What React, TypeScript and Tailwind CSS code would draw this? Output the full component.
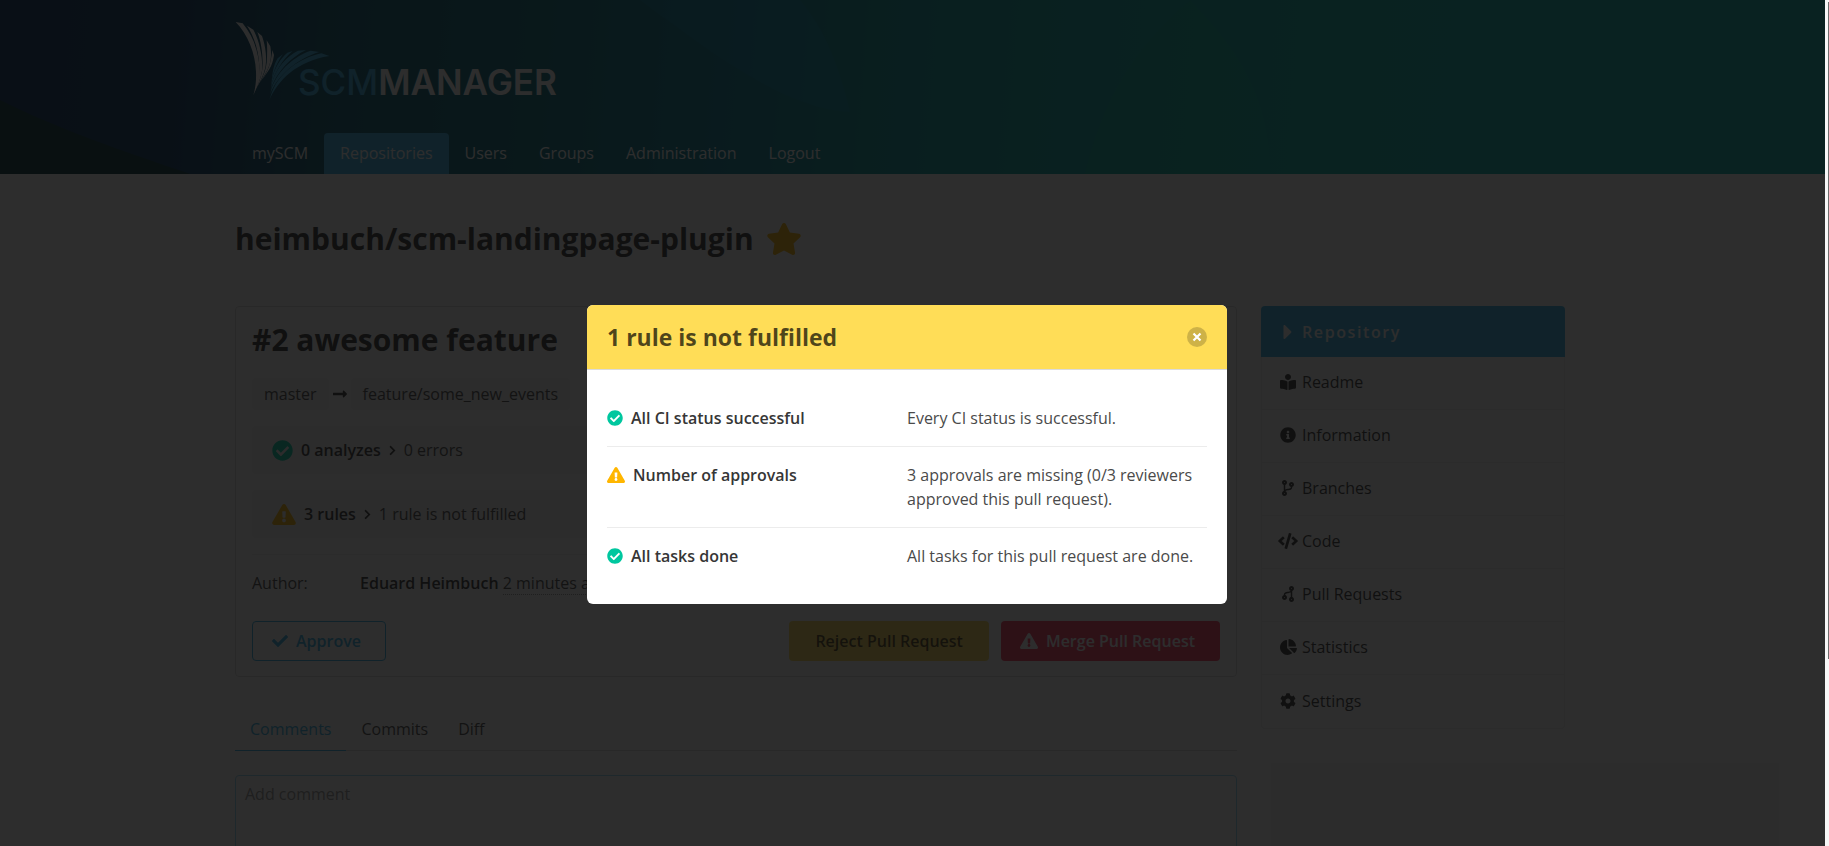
import type { ReactNode } from "react";
import type { IconType } from "react-icons";
import {
  FaBookReader,
  FaCaretRight,
  FaChartPie,
  FaCheck,
  FaCheckCircle,
  FaChevronRight,
  FaCode,
  FaCodeBranch,
  FaCog,
  FaExclamationTriangle,
  FaInfoCircle,
  FaLongArrowAltRight,
  FaStar,
} from "react-icons/fa";

const navItems = ["mySCM", "Repositories", "Users", "Groups", "Administration", "Logout"];

const sideItems: { label: string; icon: IconType; iconClass: string }[] = [
  { label: "Readme", icon: FaBookReader, iconClass: "size-4" },
  { label: "Information", icon: FaInfoCircle, iconClass: "size-4" },
  { label: "Branches", icon: FaCodeBranch, iconClass: "size-4" },
  { label: "Code", icon: FaCode, iconClass: "h-4 w-5" },
  { label: "Pull Requests", icon: FaCodeBranch, iconClass: "size-4 rotate-180" },
  { label: "Statistics", icon: FaChartPie, iconClass: "h-4 w-[17px]" },
  { label: "Settings", icon: FaCog, iconClass: "size-4" },
];

const rules = [
  { ok: true, name: "All CI status successful", text: "Every CI status is successful." },
  {
    ok: false,
    name: "Number of approvals",
    text: "3 approvals are missing (0/3 reviewers approved this pull request).",
  },
  { ok: true, name: "All tasks done", text: "All tasks for this pull request are done." },
];

function Logo() {
  return (
    <svg width="340" height="82" viewBox="0 0 340 82" role="img" aria-label="SCM-Manager">
      <g transform="translate(-15 -20) scale(0.33333)">
        <g fill="#ffffff">
          <path d="M47 66 L68 70 C104 112 120 170 119 222 C117 248 108 268 100 286 C107 262 109 240 108 215 C106 160 84 104 47 66Z" />
          <path d="M81 77 L100 89 C121 128 129 178 126 212 C122 236 113 256 104 276 C114 248 119 225 118 198 C116 150 101 106 81 77Z" />
          <path d="M112 96 L126 108 C138 142 141 178 136 203 C131 224 121 244 110 264 C122 236 128 214 128 190 C128 154 122 122 112 96Z" />
          <path d="M140 121 L151 139 C155 164 153 182 147 198 C140 216 130 232 119 248 C131 226 138 208 140 188 C142 164 142 142 140 121Z" />
          <path d="M157 150 L162 165 C160 182 155 196 148 208 C142 218 134 229 127 238 C138 220 147 204 151 186 C154 172 156 160 157 150Z" />
        </g>
        <g fill="#33b2e8">
          <path d="M328 168 L304 160 C240 174 180 215 156 276 L148 300 C172 242 232 182 328 168Z" />
          <path d="M298 156 L272 152 C226 168 176 206 155 264 L150 284 C172 226 232 176 298 156Z" />
          <path d="M258 150 L234 152 C202 168 170 200 156 248 L152 270 C168 218 212 172 258 150Z" />
          <path d="M218 153 L202 158 C180 176 163 206 156 238 L153 258 C164 216 188 178 218 153Z" />
          <path d="M189 163 L173 175 C162 192 158 212 155 242 C163 208 172 186 189 163Z" />
        </g>
      </g>
      <text x="63" y="75" fontFamily="Inter, sans-serif" fontSize="35" fontWeight="500" fill="#33b2e8">
        SCM
        <tspan fill="#ffffff" fontWeight="600">
          MANAGER
        </tspan>
      </text>
    </svg>
  );
}

function Header() {
  return (
    <header className="relative bg-[linear-gradient(95deg,#002d60_0%,#003560_10%,#00566e_18%,#006a7c_30%,#007e96_41%,#009498_48%,#00a4a0_58%,#00b0a6_75%,#00b0ac_100%)]">
      <svg
        className="absolute inset-0 size-full"
        viewBox="0 0 1825 174"
        preserveAspectRatio="none"
        aria-hidden="true"
      >
        <path d="M0 100 C60 130 120 150 190 174 L0 174Z" fill="#003428" opacity="0.7" />
        <path d="M640 0 C720 60 790 110 850 112 C840 70 826 30 800 0Z" fill="#0094c4" opacity="0.25" />
        <path d="M1190 0 C1130 50 1100 110 1085 174 L1270 174 C1270 100 1240 50 1190 0Z" fill="#08bd90" opacity="0.2" />
        <path d="M1470 0 C1410 50 1390 110 1385 174 L1640 174 C1700 100 1760 50 1825 20 L1825 0Z" fill="#08c0a8" opacity="0.2" />
      </svg>
      <div className="relative mx-auto max-w-[1355px] pt-5">
        <Logo />
        <nav className="mt-[31px] flex pl-px" aria-label="Main">
          {navItems.map((item) => (
            <a
              key={item}
              href="#"
              className={
                item === "Repositories"
                  ? "rounded-t bg-[#33b2e8] px-4 py-2 leading-[25px] text-white"
                  : "px-4 py-2 leading-[25px] text-white"
              }
            >
              {item}
            </a>
          ))}
        </nav>
      </div>
    </header>
  );
}

function StatusBar({ icon, title, text }: { icon: ReactNode; title: string; text: string }) {
  return (
    <div className="mt-4 flex h-12 items-center rounded bg-[#f5f5f5] px-5">
      {icon}
      <strong className="ml-2 font-semibold text-[#363636]">{title}</strong>
      <FaChevronRight className="mx-[6px] size-[11px] text-[#363636]" />
      <span>{text}</span>
    </div>
  );
}

function PullRequest() {
  return (
    <section className="rounded border border-[#dbdbdb] px-4 py-[15px]">
      <h2 className="text-[30px] leading-9 font-bold text-[#363636]">#2 awesome feature</h2>
      <div className="mt-5 flex items-center">
        <span className="rounded bg-[#f5f5f5] px-3 py-1">master</span>
        <FaLongArrowAltRight className="mx-[3px] size-4 text-[#363636]" />
        <span className="rounded bg-[#f5f5f5] px-3 py-1">feature/some_new_events</span>
      </div>
      <StatusBar
        icon={<FaCheckCircle className="size-[21px] text-[#00d1a7]" />}
        title="0 analyzes"
        text="0 errors"
      />
      <StatusBar
        icon={<FaExclamationTriangle className="h-[21px] w-6 text-[#ffb600]" />}
        title="3 rules"
        text="1 rule is not fulfilled"
      />
      <div className="mt-4 flex border-t border-[#f0f0f0] pt-4">
        <span className="w-[108px]">Author:</span>
        <span>
          <strong className="font-semibold text-[#363636]">Eduard Heimbuch</strong>{" "}
          <time className="border-b border-dotted border-[#999999]">2 minutes ago</time>
        </span>
      </div>
      <div className="mt-[26px] flex gap-3">
        <button
          type="button"
          className="flex h-10 items-center gap-2 rounded border border-[#33b2e8] pr-6 pl-[19px] font-semibold text-[#33b2e8]"
        >
          <FaCheck className="size-4" />
          Approve
        </button>
        <button
          type="button"
          className="ml-auto h-10 rounded bg-[#ffdd57] px-[26px] font-semibold text-black/70"
        >
          Reject Pull Request
        </button>
        <button
          type="button"
          className="flex h-10 items-center gap-2 rounded bg-[#ff3860] pr-[25px] pl-[19px] font-semibold text-white"
        >
          <FaExclamationTriangle className="h-4 w-[18px]" />
          Merge Pull Request
        </button>
      </div>
    </section>
  );
}

function Sidebar() {
  return (
    <aside className="w-[304px] shrink-0">
      <h2 className="flex h-[51px] items-center rounded-t bg-[#33b2e8] pl-[17px] font-semibold tracking-widest text-white">
        <span className="mr-1 flex w-5 justify-center">
          <FaCaretRight className="size-6 shrink-0" />
        </span>
        Repository
      </h2>
      <nav className="rounded-b border-x border-b border-[#eeeeee]" aria-label="Repository">
        {sideItems.map(({ label, icon: Icon, iconClass }) => (
          <a
            key={label}
            href="#"
            className="flex h-[53px] items-center border-b border-[#eeeeee] pb-[2px] pl-4 text-[#363636] last:border-b-0"
          >
            <span className="mr-1 flex w-5 justify-center">
              <Icon className={iconClass} />
            </span>
            {label}
          </a>
        ))}
      </nav>
    </aside>
  );
}

function RulesDialog() {
  return (
    <div
      role="dialog"
      aria-modal="true"
      aria-labelledby="dialog-title"
      className="w-[640px] overflow-hidden rounded-md bg-white"
    >
      <div className="flex items-center justify-between border-b border-[#dbdbdb] bg-[#ffdd57] px-5 py-4">
        <h2 id="dialog-title" className="text-[23px] leading-8 font-bold text-black/70">
          1 rule is not fulfilled
        </h2>
        <button
          type="button"
          aria-label="Close"
          className="flex size-5 items-center justify-center rounded-full bg-[#0a0a0a]/20"
        >
          <svg width="10" height="10" viewBox="0 0 10 10" aria-hidden="true">
            <path d="M1.5 1.5 L8.5 8.5 M8.5 1.5 L1.5 8.5" stroke="#ffffff" strokeWidth="2.2" />
          </svg>
        </button>
      </div>
      <div className="p-5">
        <table className="w-full table-fixed border-collapse text-left">
          <tbody>
            {rules.map(({ ok, name, text }) => (
              <tr key={name} className="border-b border-[#ececec] last:border-b-0">
                <th scope="row" className="py-4 align-top font-semibold text-[#363636]">
                  <span className="flex items-center gap-2">
                    {ok ? (
                      <FaCheckCircle className="size-4 text-[#00c79f]" />
                    ) : (
                      <FaExclamationTriangle className="h-4 w-[18px] text-[#ffb600]" />
                    )}
                    {name}
                  </span>
                </th>
                <td className="py-4 align-top">{text}</td>
              </tr>
            ))}
          </tbody>
        </table>
      </div>
    </div>
  );
}

export default function App() {
  return (
    <div className="relative flex h-screen overflow-hidden bg-white font-['Open_Sans',sans-serif] text-[16px] leading-6 text-[#4a4a4a]">
      <div className="min-w-0 flex-1">
        <Header />
        <main className="mx-auto max-w-[1355px] pr-[25px] pt-[47px]">
          <h1 className="flex h-9 items-center gap-3 text-[30px] leading-9 font-bold text-[#363636]">
            heimbuch/scm-landingpage-plugin
            <FaStar className="h-8 w-9 text-[#ffb600]" />
          </h1>
          <div className="mt-[49px] flex items-start gap-6">
            <div className="min-w-0 flex-1">
              <PullRequest />
              <div className="mt-8 flex border-b border-[#dbdbdb]" role="tablist">
                <button
                  type="button"
                  role="tab"
                  aria-selected="true"
                  className="-mb-px border-b border-[#33b2e8] px-[15px] pt-2 pb-[9px] text-[#33b2e8]"
                >
                  Comments
                </button>
                <button type="button" role="tab" aria-selected="false" className="px-[15px] pt-2 pb-[9px]">
                  Commits
                </button>
                <button type="button" role="tab" aria-selected="false" className="px-[15px] pt-2 pb-[9px]">
                  Diff
                </button>
              </div>
              <textarea
                aria-label="Add comment"
                placeholder="Add comment"
                rows={5}
                className="mt-6 block w-full resize-none rounded border border-[#98d8f3] px-[9px] py-[6px] placeholder:text-[#999999]"
              />
            </div>
            <Sidebar />
          </div>
        </main>
      </div>
      <div className="w-1 shrink-0 bg-[#f7f7f7] py-[2px] pl-[3px]">
        <div className="h-[78%] w-px bg-[#6e6e6e]" />
      </div>
      <div className="absolute inset-y-0 left-0 right-1 flex items-center justify-center bg-[#0a0a0a]/86 pt-[63px] pr-[11px]">
        <RulesDialog />
      </div>
    </div>
  );
}
